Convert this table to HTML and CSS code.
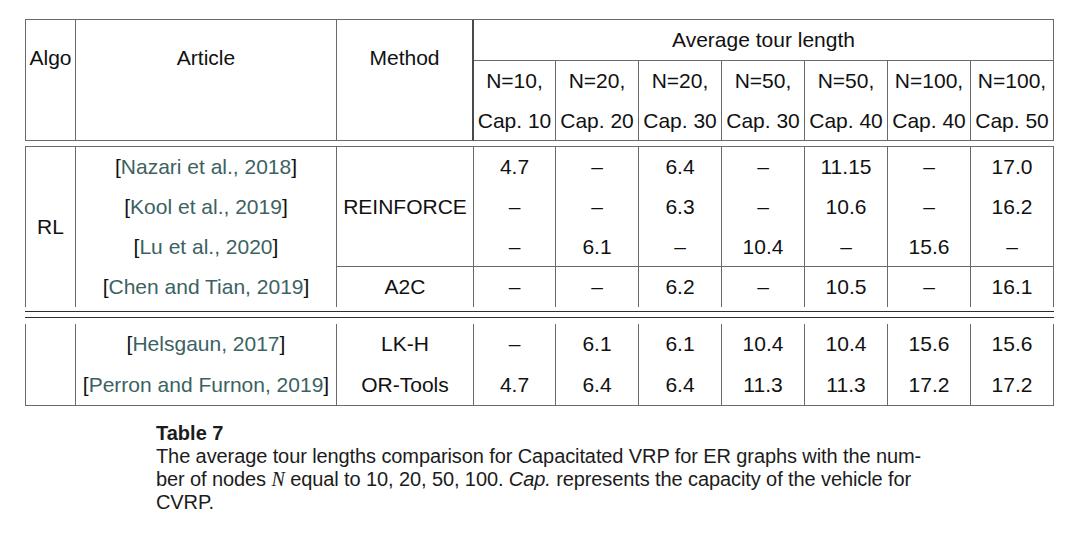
FILE: index.html
```html
<!DOCTYPE html>
<html>
<head>
<meta charset="utf-8">
<link rel="stylesheet" href="styles.css">
</head>
<body>
<div class="page">
  <div class="grid head">
    <div class="cell top span2 algo">Algo</div>
    <div class="cell top span2">Article</div>
    <div class="cell top span2 meth">Method</div>
    <div class="cell avg">Average tour length</div>
    <div class="cell nc">N=10,<br>Cap. 10</div>
    <div class="cell nc">N=20,<br>Cap. 20</div>
    <div class="cell nc">N=20,<br>Cap. 30</div>
    <div class="cell nc">N=50,<br>Cap. 30</div>
    <div class="cell nc">N=50,<br>Cap. 40</div>
    <div class="cell nc">N=100,<br>Cap. 40</div>
    <div class="cell nc">N=100,<br>Cap. 50</div>
  </div>

  <div class="grid body1">
    <div class="cell rl">RL</div>
    <div class="cell art">[<span class="cite">Nazari et al., 2018</span>]</div>
    <div class="cell reinf">REINFORCE</div>
    <div class="cell">4.7</div><div class="cell">–</div><div class="cell">6.4</div><div class="cell">–</div><div class="cell">11.15</div><div class="cell">–</div><div class="cell">17.0</div>

    <div class="cell art">[<span class="cite">Kool et al., 2019</span>]</div>
    <div class="cell">–</div><div class="cell">–</div><div class="cell">6.3</div><div class="cell">–</div><div class="cell">10.6</div><div class="cell">–</div><div class="cell">16.2</div>

    <div class="cell art">[<span class="cite">Lu et al., 2020</span>]</div>
    <div class="cell ul">–</div><div class="cell ul">6.1</div><div class="cell ul">–</div><div class="cell ul">10.4</div><div class="cell ul">–</div><div class="cell ul">15.6</div><div class="cell ul">–</div>

    <div class="cell art">[<span class="cite">Chen and Tian, 2019</span>]</div>
    <div class="cell">A2C</div>
    <div class="cell">–</div><div class="cell">–</div><div class="cell">6.2</div><div class="cell">–</div><div class="cell">10.5</div><div class="cell">–</div><div class="cell">16.1</div>
  </div>

  <div class="double">
    <div class="rule"></div>
    <div class="rule"></div>
  </div>

  <div class="grid body2">
    <div class="cell empty"></div>
    <div class="cell art">[<span class="cite">Helsgaun, 2017</span>]</div>
    <div class="cell">LK-H</div>
    <div class="cell">–</div><div class="cell">6.1</div><div class="cell">6.1</div><div class="cell">10.4</div><div class="cell">10.4</div><div class="cell">15.6</div><div class="cell">15.6</div>

    <div class="cell art tall">[<span class="cite">Perron and Furnon, 2019</span>]</div>
    <div class="cell tall">OR-Tools</div>
    <div class="cell tall">4.7</div><div class="cell tall">6.4</div><div class="cell tall">6.4</div><div class="cell tall">11.3</div><div class="cell tall">11.3</div><div class="cell tall">17.2</div><div class="cell tall">17.2</div>
  </div>

  <div class="caption">
    <div class="cap-title">Table 7</div>
    <p class="cap-text">The average tour lengths comparison for Capacitated VRP for ER graphs with the num-<br>ber of nodes <i class="math">N</i> equal to 10, 20, 50, 100. <i>Cap.</i> represents the capacity of the vehicle for<br>CVRP.</p>
  </div>
</div>
</body>
</html>
```

FILE: styles.css
```css
html, body {
  margin: 0;
  padding: 0;
  background: #ffffff;
}

.page {
  padding: 19px 0 0 25px;
  font-family: "Liberation Sans", Arial, sans-serif;
  color: #111111;
}

.grid {
  display: grid;
  grid-template-columns: 50px 261px 137px 82px repeat(6, 83px);
  width: 1029px;
  box-sizing: border-box;
  border-left: 1px solid #6a6a6a;
  font-size: 21px;
}

.cell {
  box-sizing: border-box;
  border-right: 1px solid #6a6a6a;
  display: flex;
  align-items: center;
  justify-content: center;
  text-align: center;
  white-space: nowrap;
  line-height: 40px;
}

/* header */
.head {
  border-top: 1px solid #6a6a6a;
  grid-template-rows: 41px 80px;
}
.head .cell {
  border-bottom: 1px solid #6a6a6a;
}
.head .span2 {
  grid-row: span 2;
  align-items: flex-start;
  padding-top: 18px;
}
.head .meth {
  border-right: 2px solid #4a4a4a;
}
.head .avg {
  grid-column: 4 / span 7;
}

/* first body section */
.body1 {
  margin-top: 5px;
  border-top: 1px solid #6a6a6a;
  grid-template-rows: repeat(4, 40px);
}
.body1 .rl {
  grid-row: span 4;
}
.body1 .reinf {
  grid-row: span 3;
  border-bottom: 1px solid #6a6a6a;
}
.body1 .ul {
  border-bottom: 1px solid #6a6a6a;
}

.cite {
  color: #3c6262;
}

/* double rule */
.double {
  width: 1029px;
  padding: 4px 0 6px;
  display: flex;
  flex-direction: column;
  gap: 5px;
}
.double .rule {
  height: 1px;
  background: #2e2e2e;
}

/* second body section */
.body2 {
  grid-template-rows: 40px 41px;
  border-bottom: 1px solid #6a6a6a;
}
.body2 .empty {
  grid-row: span 2;
}

/* caption */
.caption {
  margin: 16px 0 0 131px;
  width: 800px;
  color: #1c1c1c;
}
.cap-title {
  font-weight: bold;
  font-size: 20px;
  line-height: 23px;
}
.cap-text {
  margin: 0;
  font-size: 20px;
  line-height: 23px;
  letter-spacing: -0.1px;
  white-space: nowrap;
}
.math {
  font-family: "Liberation Serif", "Times New Roman", serif;
  font-style: italic;
}
```
